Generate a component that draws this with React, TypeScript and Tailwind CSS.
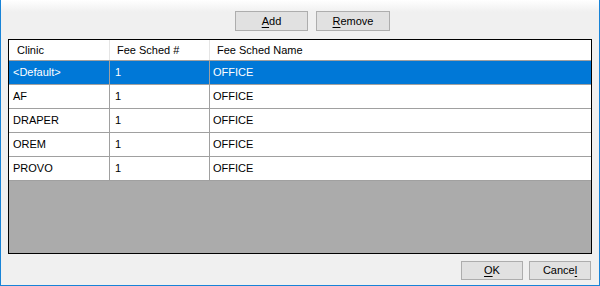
const rows = [
  { clinic: "<Default>", num: "1", name: "OFFICE" },
  { clinic: "AF", num: "1", name: "OFFICE" },
  { clinic: "DRAPER", num: "1", name: "OFFICE" },
  { clinic: "OREM", num: "1", name: "OFFICE" },
  { clinic: "PROVO", num: "1", name: "OFFICE" },
];

function WinButton({
  label,
  mnemonic,
  className,
}: {
  label: string;
  mnemonic: number;
  className: string;
}) {
  return (
    <button
      type="button"
      className={`flex items-center justify-center border border-[#adadad] bg-[#e1e1e1] text-[11px] text-black ${className}`}
    >
      {label.slice(0, mnemonic)}
      <span className="underline underline-offset-2">{label[mnemonic]}</span>
      {label.slice(mnemonic + 1)}
    </button>
  );
}

export default function App() {
  return (
    <div className="flex h-[286px] w-[600px] flex-col border-x border-b border-[#1883d7] bg-[linear-gradient(to_bottom,#ffffff_0px,#f0f0f0_12px)] font-['Liberation_Sans',Arial,sans-serif]">
      <div className="flex gap-[8px] pl-[234px] pt-[11px]">
        <WinButton label="Add" mnemonic={0} className="h-[20px] w-[73px]" />
        <WinButton label="Remove" mnemonic={0} className="h-[20px] w-[74px]" />
      </div>

      <div className="mx-[7px] mt-[8px] flex h-[215px] flex-col border border-black bg-[#ababab]">
        <div className="flex h-[21px] border-b border-[#a0a0a0] bg-white text-[11px] text-black">
          <div className="flex w-[101px] items-center border-r border-[#e5e5e5] pl-[8px]">
            Clinic
          </div>
          <div className="flex w-[100px] items-center border-r border-[#e5e5e5] pl-[7px]">
            Fee Sched #
          </div>
          <div className="flex flex-1 items-center pl-[7px]">Fee Sched Name</div>
        </div>
        {rows.map((r, i) => (
          <div
            key={r.clinic}
            className={`flex h-[24px] border-b border-[#a0a0a0] text-[11px] ${
              i === 0 ? "bg-[#0078d7] text-white" : "bg-white text-black"
            }`}
          >
            <div className="flex w-[101px] items-center border-r border-[#a0a0a0] pl-[4px]">
              {r.clinic}
            </div>
            <div className="flex w-[100px] items-center border-r border-[#a0a0a0] pl-[5px]">
              {r.num}
            </div>
            <div className="flex flex-1 items-center pl-[3px]">{r.name}</div>
          </div>
        ))}
      </div>

      <div className="flex justify-end gap-[6px] pr-[8px] pt-[7px]">
        <WinButton label="OK" mnemonic={0} className="h-[19px] w-[62px]" />
        <WinButton label="Cancel" mnemonic={5} className="h-[19px] w-[62px]" />
      </div>
    </div>
  );
}
